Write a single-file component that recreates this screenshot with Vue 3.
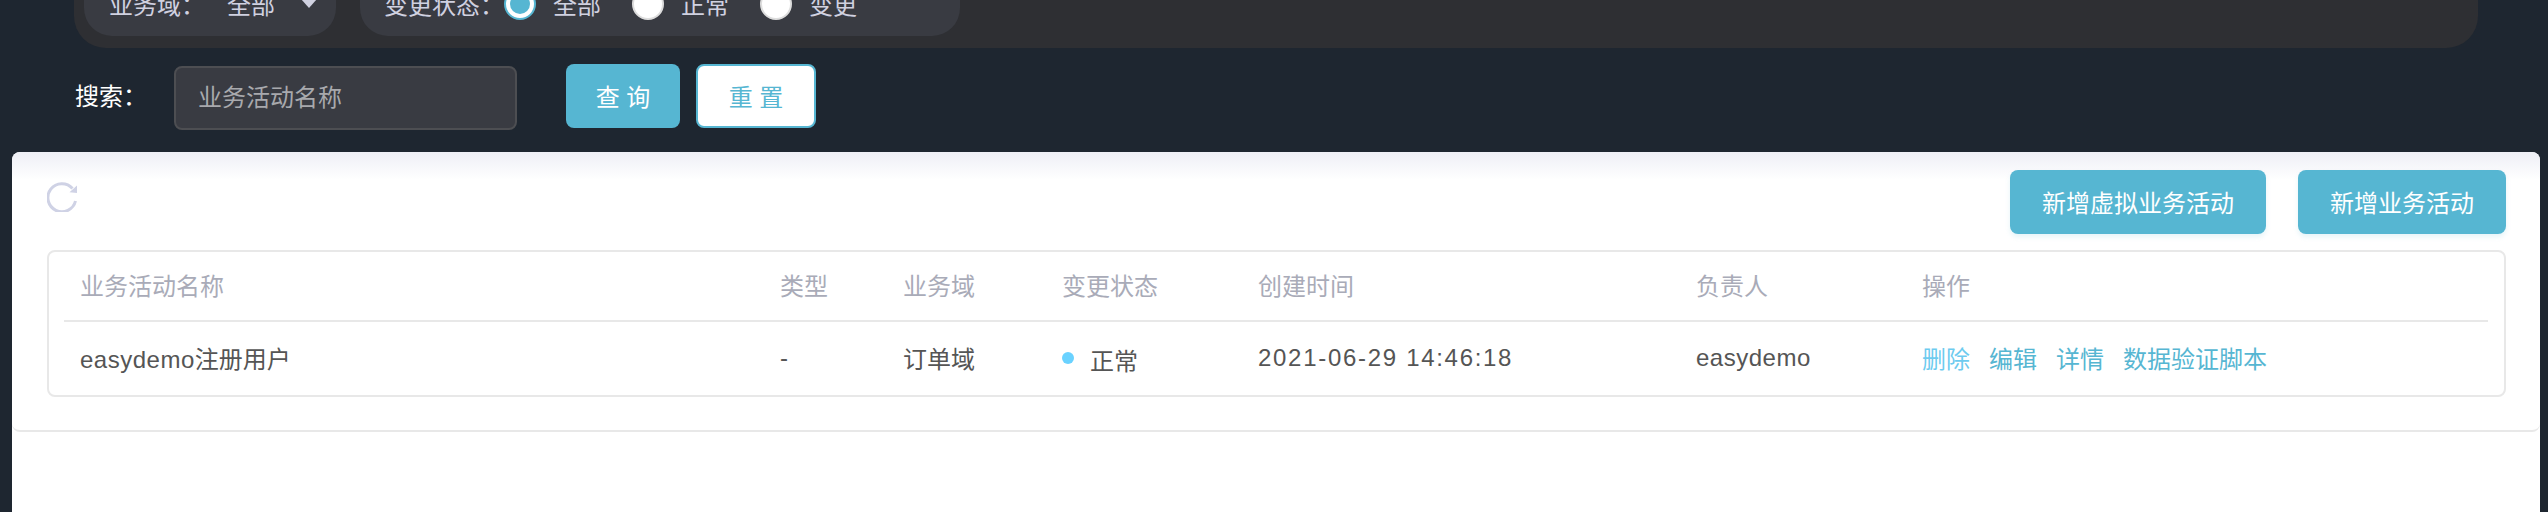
<template>
  <div class="page">
    <!-- 筛选条件 -->
    <div class="filter">
      <div class="pill pill_domain">
        <span class="filter_label">业务域：</span>
        <span class="filter_value">全部</span>
        <span class="arrow"></span>
      </div>
      <div class="pill pill_status">
        <span class="filter_label">变更状态：</span>
        <div class="radio_item" v-for="item in statusList" :key="item.label">
          <span :class="['radio', { checked: item.checked }]"></span>
          <span class="filter_value">{{ item.label }}</span>
        </div>
      </div>
    </div>

    <!-- 搜索 -->
    <div class="search">
      <span class="search_label">搜索：</span>
      <input class="search_input" type="text" placeholder="业务活动名称" />
      <button class="btn btn_query">查 询</button>
      <button class="btn btn_reset">重 置</button>
    </div>

    <!-- 列表 -->
    <div class="content">
      <div class="card">
        <div class="toolbar">
          <svg class="refresh" width="30" height="30" viewBox="0 0 30 30">
            <path d="M28.5 19A14 14 0 1 1 25.5 6.5" fill="none" stroke="#cfd2e5" stroke-width="3" />
            <path d="M30 3.5V11L22.5 10.2Z" fill="#cfd2e5" />
          </svg>
          <button class="btn btn_add btn_virtual">新增虚拟业务活动</button>
          <button class="btn btn_add">新增业务活动</button>
        </div>

        <div class="table_box">
          <div class="row row_head">
            <div v-for="col in columns" :key="col">{{ col }}</div>
          </div>
          <div class="row row_body">
            <div><span class="latin">easydemo</span>注册用户</div>
            <div>-</div>
            <div>订单域</div>
            <div class="status">
              <span class="dot"></span>
              <span class="status_text">正常</span>
            </div>
            <div class="time">2021-06-29 14:46:18</div>
            <div class="latin">easydemo</div>
            <div class="actions">
              <a class="first">删除</a>
              <a>编辑</a>
              <a>详情</a>
              <a>数据验证脚本</a>
            </div>
          </div>
        </div>
      </div>
    </div>
  </div>
</template>

<script setup>
const statusList = [
  { label: '全部', checked: true },
  { label: '正常', checked: false },
  { label: '变更', checked: false }
]

const columns = ['业务活动名称', '类型', '业务域', '变更状态', '创建时间', '负责人', '操作']
</script>

<style>
html,
body {
  margin: 0;
  background-color: #1e2630;
}
</style>

<style scoped>
.page {
  display: flex;
  flex-direction: column;
  height: 512px;
  overflow: hidden;
  background-color: #1e2630;
  font-family: 'Liberation Sans', 'Noto Sans CJK SC', sans-serif;
  font-size: 24px;
}

/* 筛选条件 */
.filter {
  display: flex;
  flex-shrink: 0;
  gap: 24px;
  box-sizing: border-box;
  height: 90px;
  margin: -42px 70px 0 74px;
  padding: 12px 10px;
  background-color: #2e2f33;
  border-radius: 32px;
}

.pill {
  display: flex;
  align-items: center;
  height: 66px;
  background-color: #393b42;
  border-radius: 28px;
  color: #d0d1e0;
  white-space: nowrap;
}

.pill_domain {
  width: 252px;
  padding-left: 25px;
  box-sizing: border-box;
}

.pill_domain .filter_label {
  width: 118px;
}

.arrow {
  width: 0;
  height: 0;
  margin-left: 26px;
  border-left: 8px solid transparent;
  border-right: 8px solid transparent;
  border-top: 9px solid #d0d1e0;
}

.pill_status {
  width: 600px;
  padding-left: 24px;
  box-sizing: border-box;
}

.pill_status .filter_label {
  flex-shrink: 0;
  width: 120px;
}

.radio_item {
  display: flex;
  align-items: center;
  width: 128px;
}

.radio {
  box-sizing: border-box;
  display: flex;
  align-items: center;
  justify-content: center;
  width: 32px;
  height: 32px;
  margin-right: 17px;
  margin-top: 2px;
  background-color: #fff;
  border: 2px solid #ddd;
  border-radius: 50%;
}

.radio.checked {
  border-color: #56b6d2;
}

.radio.checked::after {
  content: '';
  width: 20px;
  height: 20px;
  background-color: #56b6d2;
  border-radius: 50%;
}

/* 搜索 */
.search {
  display: flex;
  flex-shrink: 0;
  align-items: flex-start;
  margin-top: 16px;
  padding-left: 75px;
  height: 66px;
}

.search_label {
  width: 99px;
  line-height: 66px;
  color: #fff;
}

.search_input {
  box-sizing: border-box;
  width: 343px;
  height: 64px;
  margin-top: 2px;
  margin-right: 49px;
  padding: 0 22px;
  background-color: #393b42;
  border: 2px solid #4d4e52;
  border-radius: 8px;
  outline: none;
  color: #fff;
  font-family: inherit;
  font-size: 24px;
}

.search_input::placeholder {
  color: #a8a9ad;
  opacity: 1;
}

.btn {
  box-sizing: border-box;
  height: 64px;
  padding: 0 0 2px;
  border: none;
  border-radius: 8px;
  background-color: #56b6d2;
  color: #fff;
  font-family: inherit;
  font-size: 24px;
  cursor: pointer;
}

.btn_query {
  width: 114px;
  margin-right: 16px;
}

.btn_reset {
  width: 120px;
  background-color: #fff;
  border: 2px solid #56b6d2;
  color: #56b6d2;
}

/* 列表 */
.content {
  flex: 1;
  margin: 22px 8px 0 12px;
  background-color: #fff;
  border-radius: 8px 8px 0 0;
}

.card {
  box-sizing: border-box;
  height: 280px;
  padding: 18px 34px 0 35px;
  background: linear-gradient(#eeeff6, #fff 28px) no-repeat;
  border-bottom: 2px solid #e8e8e8;
  border-radius: 8px;
}

.toolbar {
  display: flex;
  align-items: flex-start;
  gap: 32px;
}

.refresh {
  margin-top: 12px;
  margin-right: auto;
}

.btn_add {
  padding: 0 32px 2px;
  box-shadow: 0 3px 5px rgba(86, 182, 210, 0.15);
}

.table_box {
  box-sizing: border-box;
  height: 147px;
  margin-top: 16px;
  padding: 0 16px 0 15px;
  border: 2px solid #e8e8e8;
  border-radius: 8px;
}

.row {
  display: grid;
  grid-template-columns: 700px 123px 159px 196px 438px 226px 1fr;
  align-items: center;
  box-sizing: content-box;
  padding-left: 16px;
}

.row_head {
  height: 64px;
  padding-bottom: 4px;
  border-bottom: 2px solid #e8e8e8;
  color: #a9abb8;
}

.row_body {
  height: 71px;
  padding-bottom: 2px;
  color: #555;
}

.latin {
  letter-spacing: 0.5px;
}

.status {
  display: flex;
  align-items: center;
}

.dot {
  width: 12px;
  height: 12px;
  margin-right: 16px;
  background-color: #6ad2ff;
  border-radius: 50%;
}

.status_text {
  margin-top: 4px;
}

.time {
  letter-spacing: 1.7px;
}

.actions {
  display: flex;
  gap: 19px;
  color: #56b6d2;
}

.actions .first {
  color: #6dcbef;
}
</style>
